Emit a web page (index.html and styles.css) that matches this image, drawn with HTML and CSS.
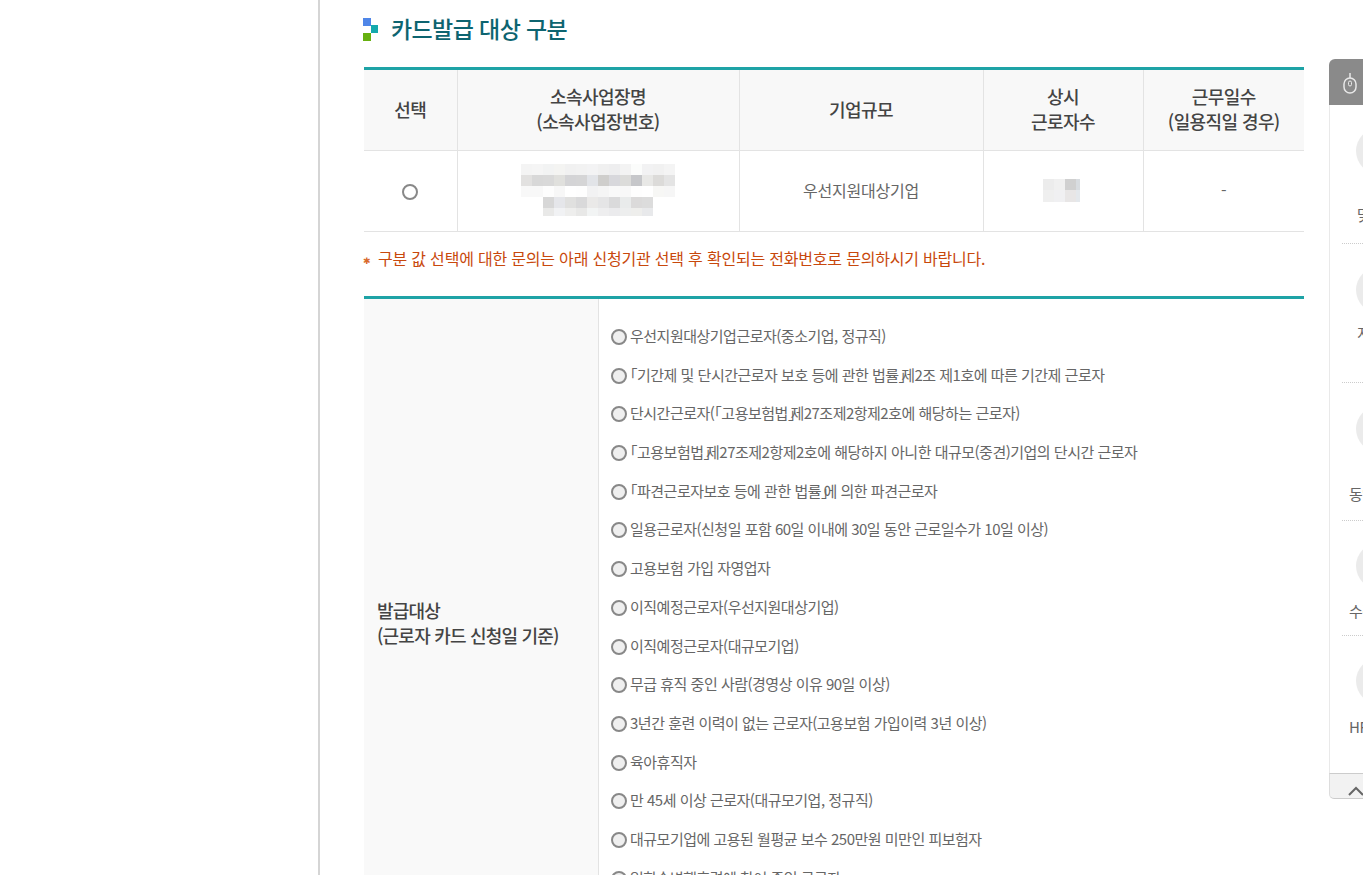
FILE: index.html
```html
<!DOCTYPE html>
<html lang="ko">
  <head>
    <meta charset="utf-8">
    <title>카드발급 대상 구분</title>
    <link rel="stylesheet" href="styles.css">
  </head>
  <body>
    <div class="page">
      <div class="side"></div>
      <div class="content">
        <h2 class="title">
          <svg class="title-icon" width="16" height="24" viewBox="0 0 16 24">
            <rect x="0" y="0" width="8" height="8" fill="#4f86e8"/>
            <rect x="8" y="7" width="7" height="8" fill="#14a9ad"/>
            <rect x="0" y="15" width="8" height="8" fill="#66b010"/>
          </svg>
          카드발급 대상 구분
        </h2>
        <table class="grid">
          <colgroup>
            <col class="c1"><col class="c2"><col class="c3"><col class="c4"><col class="c5">
          </colgroup>
          <thead>
            <tr>
              <th>선택</th>
              <th>소속사업장명<br>(소속사업장번호)</th>
              <th>기업규모</th>
              <th>상시<br>근로자수</th>
              <th>근무일수<br>(일용직일 경우)</th>
            </tr>
          </thead>
          <tbody>
            <tr>
              <td><span class="radio radio-plain"></span></td>
              <td>
                <svg class="blur-name" width="154" height="52" viewBox="0 0 154 52">
                  <g>
                    <rect x="0" y="0" width="11" height="11" fill="#f4f4f4"/><rect x="11" y="0" width="11" height="11" fill="#f5f5f5"/><rect x="22" y="0" width="11" height="11" fill="#f2f3f3"/><rect x="33" y="0" width="11" height="11" fill="#f4f4f2"/><rect x="44" y="0" width="11" height="11" fill="#f1f1f1"/><rect x="55" y="0" width="11" height="11" fill="#f2f2f2"/><rect x="66" y="0" width="11" height="11" fill="#f3f3f4"/><rect x="77" y="0" width="11" height="11" fill="#f0f0f0"/><rect x="88" y="0" width="11" height="11" fill="#eeeeef"/><rect x="99" y="0" width="11" height="11" fill="#f3f3f3"/><rect x="110" y="0" width="11" height="11" fill="#fbfcfb"/><rect x="121" y="0" width="11" height="11" fill="#f2f2f3"/><rect x="132" y="0" width="11" height="11" fill="#f1f1f1"/><rect x="143" y="0" width="11" height="11" fill="#f4f4f4"/>
                    <rect x="0" y="11" width="11" height="11" fill="#e2e1e0"/><rect x="11" y="11" width="11" height="11" fill="#d8d8d8"/><rect x="22" y="11" width="11" height="11" fill="#d9d9d9"/><rect x="33" y="11" width="11" height="11" fill="#e0e0dd"/><rect x="44" y="11" width="11" height="11" fill="#d4d4d6"/><rect x="55" y="11" width="11" height="11" fill="#d5d5d6"/><rect x="66" y="11" width="11" height="11" fill="#e2e4e8"/><rect x="77" y="11" width="11" height="11" fill="#cfcecc"/><rect x="88" y="11" width="11" height="11" fill="#d8d8dc"/><rect x="99" y="11" width="11" height="11" fill="#dcdcda"/><rect x="110" y="11" width="11" height="11" fill="#c6c7ca"/><rect x="121" y="11" width="11" height="11" fill="#e8e8e6"/><rect x="132" y="11" width="11" height="11" fill="#dcdbd9"/><rect x="143" y="11" width="11" height="11" fill="#e4e4e4"/>
                    <rect x="0" y="22" width="11" height="11" fill="#f8f8f8"/><rect x="11" y="22" width="11" height="11" fill="#f8f8f8"/><rect x="22" y="22" width="11" height="11" fill="#fdfdfd"/><rect x="33" y="22" width="11" height="11" fill="#f7f7f7"/><rect x="44" y="22" width="11" height="11" fill="#ffffff"/><rect x="55" y="22" width="11" height="11" fill="#fefefe"/><rect x="66" y="22" width="11" height="11" fill="#f2f2f3"/><rect x="77" y="22" width="11" height="11" fill="#f5f5f5"/><rect x="88" y="22" width="11" height="11" fill="#f9f9f9"/><rect x="99" y="22" width="11" height="11" fill="#f8f8f8"/><rect x="110" y="22" width="11" height="11" fill="#fefefe"/><rect x="121" y="22" width="11" height="11" fill="#ffffff"/><rect x="132" y="22" width="11" height="11" fill="#f7f7f5"/><rect x="143" y="22" width="11" height="11" fill="#f6f6f6"/>
                    <rect x="22" y="33" width="11" height="11" fill="#d7d7d7"/><rect x="33" y="33" width="11" height="11" fill="#e5e6ea"/><rect x="44" y="33" width="11" height="11" fill="#e0e0df"/><rect x="55" y="33" width="11" height="11" fill="#d9d9da"/><rect x="66" y="33" width="11" height="11" fill="#eae9e8"/><rect x="77" y="33" width="11" height="11" fill="#e5e5e6"/><rect x="88" y="33" width="11" height="11" fill="#dadadb"/><rect x="99" y="33" width="11" height="11" fill="#e9ebeb"/><rect x="110" y="33" width="11" height="11" fill="#dbdada"/><rect x="121" y="33" width="11" height="11" fill="#dcdcdc"/>
                    <rect x="22" y="44" width="11" height="8" fill="#e9e9e8"/><rect x="33" y="44" width="11" height="8" fill="#f1f2f4"/><rect x="44" y="44" width="11" height="8" fill="#eeeeed"/><rect x="55" y="44" width="11" height="8" fill="#e8e8e7"/><rect x="66" y="44" width="11" height="8" fill="#f2f4f4"/><rect x="77" y="44" width="11" height="8" fill="#eeeeef"/><rect x="88" y="44" width="11" height="8" fill="#ebebed"/><rect x="99" y="44" width="11" height="8" fill="#edeeee"/><rect x="110" y="44" width="11" height="8" fill="#eeeeec"/><rect x="121" y="44" width="11" height="8" fill="#e8e9eb"/>
                  </g>
                </svg>
              </td>
              <td>우선지원대상기업</td>
              <td>
                <svg class="blur-count" width="37" height="23" viewBox="0 0 37 23">
                  <rect x="0" y="0" width="11" height="11" fill="#ececec"/><rect x="11" y="0" width="11" height="11" fill="#f0f0f0"/><rect x="22" y="0" width="11" height="11" fill="#d0d0d0"/><rect x="33" y="0" width="4" height="11" fill="#d8dce0"/>
                  <rect x="0" y="11" width="11" height="12" fill="#efefef"/><rect x="11" y="11" width="11" height="12" fill="#f0f0f2"/><rect x="22" y="11" width="11" height="12" fill="#e8e6e6"/><rect x="33" y="11" width="4" height="12" fill="#e4e8ec"/>
                </svg>
              </td>
              <td>-</td>
            </tr>
          </tbody>
        </table>
        <p class="notice"><span class="star">✱</span>구분 값 선택에 대한 문의는 아래 신청기관 선택 후 확인되는 전화번호로 문의하시기 바랍니다.</p>
        <div class="target">
          <div class="target-head">발급대상<br>(근로자 카드 신청일 기준)</div>
          <ul class="target-list">
            <li><span class="radio"></span>우선지원대상기업근로자(중소기업, 정규직)</li>
            <li><span class="radio"></span>「기간제 및 단시간근로자 보호 등에 관한 법률<span class="bk">」</span>제2조 제1호에 따른 기간제 근로자</li>
            <li><span class="radio"></span>단시간근로자(「고용보험법<span class="bk">」</span>제27조제2항제2호에 해당하는 근로자)</li>
            <li><span class="radio"></span>「고용보험법<span class="bk">」</span>제27조제2항제2호에 해당하지 아니한 대규모(중견)기업의 단시간 근로자</li>
            <li><span class="radio"></span>「파견근로자보호 등에 관한 법률<span class="bk">」</span>에 의한 파견근로자</li>
            <li><span class="radio"></span>일용근로자(신청일 포함 60일 이내에 30일 동안 근로일수가 10일 이상)</li>
            <li><span class="radio"></span>고용보험 가입 자영업자</li>
            <li><span class="radio"></span>이직예정근로자(우선지원대상기업)</li>
            <li><span class="radio"></span>이직예정근로자(대규모기업)</li>
            <li><span class="radio"></span>무급 휴직 중인 사람(경영상 이유 90일 이상)</li>
            <li><span class="radio"></span>3년간 훈련 이력이 없는 근로자(고용보험 가입이력 3년 이상)</li>
            <li><span class="radio"></span>육아휴직자</li>
            <li><span class="radio"></span>만 45세 이상 근로자(대규모기업, 정규직)</li>
            <li><span class="radio"></span>대규모기업에 고용된 월평균 보수 250만원 미만인 피보험자</li>
            <li><span class="radio"></span>일학습병행훈련에 참여 중인 근로자</li>
          </ul>
        </div>
      </div>
    </div>
    <div class="quick">
      <div class="quick-top">
        <svg width="14" height="22" viewBox="0 0 14 22" fill="none" stroke="#e8e8e8" stroke-width="1.5">
          <rect x="1" y="6" width="12" height="15" rx="6"/>
          <rect x="5.5" y="9" width="3" height="5" rx="1.5" stroke-width="1"/>
          <path d="M7 6V1"/>
        </svg>
      </div>
      <div class="quick-body">
        <div class="quick-item q1"><span class="q-circle"></span><span class="q-label">맞춤</span></div>
        <div class="quick-item q2"><span class="q-circle"></span><span class="q-label">지원</span></div>
        <div class="quick-item q3"><span class="q-circle"></span><span class="q-label">동영상</span></div>
        <div class="quick-item q4"><span class="q-circle"></span><span class="q-label">수강</span></div>
        <div class="quick-item q5"><span class="q-circle"></span><span class="q-label">HRD</span></div>
      </div>
      <div class="quick-foot">
        <svg width="16" height="10" viewBox="0 0 16 10" fill="none" stroke="#666" stroke-width="2"><path d="M1 9L8 2L15 9"/></svg>
      </div>
    </div>
  </body>
</html>
```

FILE: styles.css
```css
html, body { margin: 0; padding: 0; height: 875px; overflow: hidden; background: #fff; }
body { font-family: "Noto Sans CJK KR", "Noto Sans", sans-serif; color: #666; font-size: 14px; letter-spacing: -0.5px; }
.page { display: flex; height: 875px; overflow: hidden; }
.side { width: 318px; flex: none; border-right: 2px solid #d5d5d5; }
.content { width: 940px; flex: none; padding-left: 44px; }

.title { display: flex; align-items: center; margin: 0; height: 67px; padding-bottom: 12px; box-sizing: border-box; font-size: 23px; font-weight: 500; color: #0d6470; letter-spacing: -0.6px; }
.title-icon { margin: 4px 12px 0 -1px; }

.grid { width: 940px; border-collapse: collapse; table-layout: fixed; border-top: 3px solid #1ea3a6; }
.c1 { width: 93px; } .c2 { width: 282px; } .c3 { width: 244px; } .c4 { width: 160px; } .c5 { width: 161px; }
.grid th { height: 78px; padding: 0 0 2px; background: #f8f8f8; font-size: 18px; font-weight: 500; line-height: 25px; color: #444; letter-spacing: -0.6px; border-left: 1px solid #e3e3e3; border-bottom: 1px solid #e3e3e3; }
.grid td { height: 78px; padding: 0 0 2px; text-align: center; font-size: 16px; letter-spacing: -0.2px; color: #666; border-left: 1px solid #e3e3e3; border-bottom: 1px solid #e3e3e3; }
.grid th:first-child, .grid td:first-child { border-left: 0; }
.blur-name { display: block; margin: 0 auto; }
.blur-count { display: block; margin: 0 auto; position: relative; left: -2px; }

.radio { display: inline-block; width: 12px; height: 12px; border: 2px solid #888; border-radius: 50%; background: #efefef; margin-right: 3px; vertical-align: -3px; }
.radio-plain { background: #fff; margin: 0 0 2px; vertical-align: middle; }

.notice { margin: 0; height: 64px; padding-top: 14px; box-sizing: border-box; color: #c8480c; font-size: 16px; letter-spacing: -0.2px; }
.star { display: inline-block; width: 15px; margin-left: -1px; font-family: "DejaVu Sans", sans-serif; font-size: 9px; color: #d96a2c; vertical-align: 1px; }

.target { display: flex; width: 940px; border-top: 3px solid #1ea3a6; height: 700px; }
.target-head { width: 235px; flex: none; box-sizing: border-box; padding: 299px 0 0 13px; background: #f9f9f9; border-right: 1px solid #e3e3e3; font-size: 18px; font-weight: 500; line-height: 25px; color: #444; letter-spacing: -0.8px; }
.target-list { list-style: none; margin: 0; padding: 18px 0 0 12px; font-feature-settings: "halt"; }
.target-list li { height: 38.7px; line-height: 38.7px; font-size: 15px; white-space: nowrap; }
.bk { letter-spacing: -5px; }

.quick { position: absolute; left: 1329px; top: 59px; width: 70px; }
.quick-top { height: 46px; padding: 13px 0 0 14px; box-sizing: border-box; background: #8a8a8a; border-radius: 6px 0 0 0; }
.quick-body { background: #fff; border-left: 1px solid #e9e9e9; box-sizing: border-box; }
.quick-item { margin-left: 12px; box-sizing: border-box; border-bottom: 1px dotted #ccc; white-space: nowrap; }
.q-circle { display: block; width: 46px; height: 46px; margin-left: 14px; border-radius: 50%; background: #ebebeb; }
.q-label { display: block; font-size: 15px; line-height: 20px; color: #666; }
.q1 { height: 139px; padding-top: 23px; }
.q1 .q-label { margin: 31px 0 0 15px; }
.q2 { height: 139px; padding-top: 23px; }
.q2 .q-label { margin: 10px 0 0 15px; }
.q3 { height: 138px; padding-top: 23px; }
.q3 .q-label { margin: 32px 0 0 7px; }
.q4 { height: 115px; padding-top: 22px; }
.q4 .q-label { margin: 12px 0 0 7px; }
.q5 { height: 137px; padding-top: 22px; border-bottom: 0; }
.q5 .q-label { margin: 13px 0 0 7px; }
.quick-foot { height: 26px; padding: 6px 0 0 18px; box-sizing: border-box; background: #f2f2f2; border-top: 1px solid #ccc; border-bottom: 1px solid #ccc; border-left: 1px solid #ddd; border-radius: 0 0 0 5px; }
```
